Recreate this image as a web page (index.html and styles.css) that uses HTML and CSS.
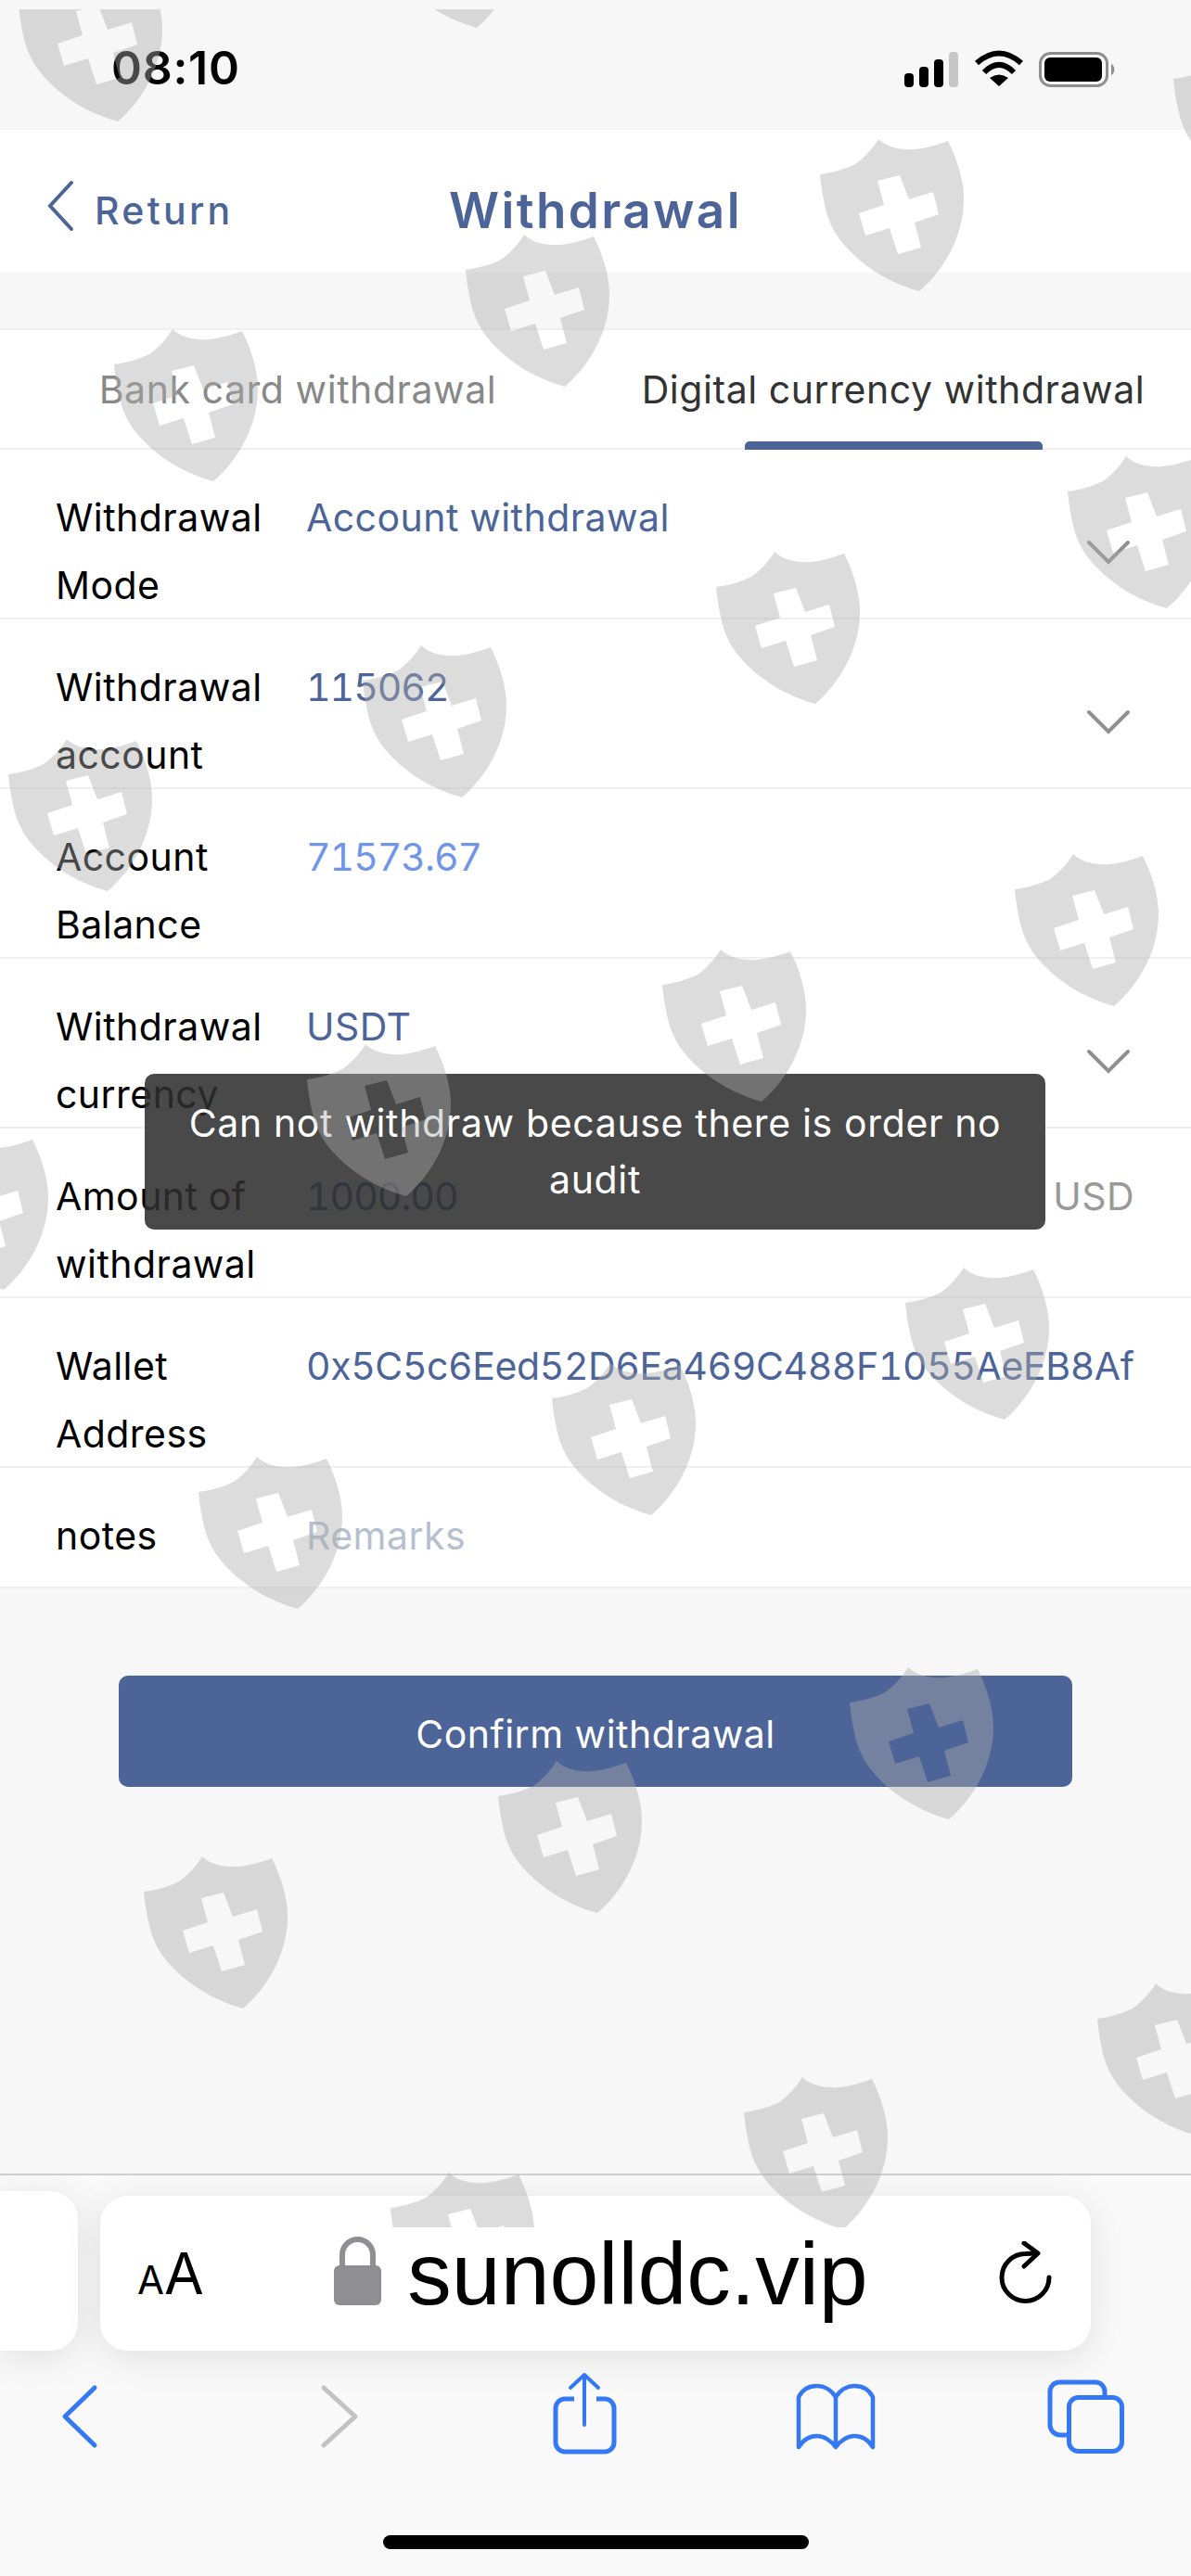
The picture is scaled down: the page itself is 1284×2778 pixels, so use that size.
FILE: index.html
```html
<!DOCTYPE html>
<html lang="en">
<head>
    <meta charset="UTF-8">
    <meta name="viewport" content="width=device-width, initial-scale=1.0">
    <title>Withdrawal</title>
    <link rel="stylesheet" href="styles.css">
</head>
<body>
    <div class="page">
        <div class="status">
            <span class="time">08:10</span>
            <div class="status-icons">
                <svg class="signal" width="58" height="38" viewBox="0 0 58 38">
                    <rect x="0" y="23" width="10" height="15" rx="4" fill="#000"/>
                    <rect x="16" y="16" width="10" height="22" rx="4" fill="#000"/>
                    <rect x="32" y="8" width="10" height="30" rx="4" fill="#000"/>
                    <rect x="48" y="0" width="10" height="38" rx="4" fill="#c6c6c6"/>
                </svg>
                <svg class="wifi" width="54" height="42" viewBox="0 0 54 42">
                    <path d="M3 16 Q27 -5 51 16" fill="none" stroke="#000" stroke-width="6"/>
                    <path d="M11 26 Q27 10 43 26" fill="none" stroke="#000" stroke-width="6"/>
                    <path d="M27 41 L17 32 Q27 25 37 32 Z" fill="#000"/>
                </svg>
                <svg class="battery" width="84" height="38" viewBox="0 0 84 38">
                    <rect x="1.5" y="1.5" width="72" height="35" rx="11" fill="none" stroke="#8e8e8e" stroke-width="3"/>
                    <rect x="6" y="6" width="62" height="26" rx="6" fill="#000"/>
                    <path d="M78 13 a7 7 0 0 1 0 12 Z" fill="#8e8e8e"/>
                </svg>
            </div>
        </div>

        <div class="nav">
            <div class="back">
                <svg width="30" height="56" viewBox="0 0 30 56">
                    <path d="M27 3 L4 28 L27 53" fill="none" stroke="#4c6497" stroke-width="4" stroke-linecap="round"/>
                </svg>
                <span>Return</span>
            </div>
            <h1 class="title">Withdrawal</h1>
        </div>

        <div class="tabs">
            <div class="tab">Bank card withdrawal</div>
            <div class="tab active">Digital currency withdrawal</div>
        </div>

        <div class="form">
            <div class="row">
                <div class="label">Withdrawal Mode</div>
                <div class="value">Account withdrawal</div>
                <svg class="chevron" width="48" height="28" viewBox="0 0 48 28"><path d="M3 3 L24 24 L45 3" fill="none" stroke="#8f8f8f" stroke-width="4" stroke-linecap="round"/></svg>
            </div>
            <div class="row">
                <div class="label">Withdrawal account</div>
                <div class="value num">115062</div>
                <svg class="chevron" width="48" height="28" viewBox="0 0 48 28"><path d="M3 3 L24 24 L45 3" fill="none" stroke="#8f8f8f" stroke-width="4" stroke-linecap="round"/></svg>
            </div>
            <div class="row">
                <div class="label">Account Balance</div>
                <div class="value num balance">71573.67</div>
            </div>
            <div class="row">
                <div class="label">Withdrawal currency</div>
                <div class="value">USDT</div>
                <svg class="chevron" width="48" height="28" viewBox="0 0 48 28"><path d="M3 3 L24 24 L45 3" fill="none" stroke="#8f8f8f" stroke-width="4" stroke-linecap="round"/></svg>
            </div>
            <div class="row">
                <div class="label">Amount of withdrawal</div>
                <div class="value num">1000.00</div>
                <div class="unit">USD</div>
            </div>
            <div class="row">
                <div class="label">Wallet Address</div>
                <div class="value address">0x5C5c6Eed52D6Ea469C488F1055AeEB8Af</div>
            </div>
            <div class="row notes">
                <div class="label">notes</div>
                <div class="value placeholder">Remarks</div>
            </div>
        </div>

        <button class="confirm" type="button">Confirm withdrawal</button>

        <div class="toolbar">
            <div class="cards">
                <div class="other-tab"></div>
                <div class="url-card">
                    <div class="aa"><span class="small-a">A</span><span class="big-a">A</span></div>
                    <div class="url">
                        <svg width="51" height="74" viewBox="0 0 51 74">
                            <path d="M9 34 V19.5 a16.5 16.5 0 0 1 33 0 V34" fill="none" stroke="#8e8e93" stroke-width="6"/>
                            <rect x="0" y="31" width="51" height="43" rx="6" fill="#8e8e93"/>
                        </svg>
                        <span>sunolldc.vip</span>
                    </div>
                    <svg class="reload" width="60" height="70" viewBox="0 0 60 70">
                        <path d="M55 39 A25.5 25.5 0 1 1 29.500 13.500 L40 13" fill="none" stroke="#000" stroke-width="5" stroke-linecap="round"/>
                        <path d="M28 2 L43 13 L28 27" fill="none" stroke="#000" stroke-width="5" stroke-linecap="round" stroke-linejoin="round"/>
                    </svg>
                </div>
            </div>
            <div class="tool-icons">
                <svg class="ti-back" width="50" height="96" viewBox="0 0 50 96">
                    <path d="M42 20 L10 51 L42 82" fill="none" stroke="#3478f6" stroke-width="5" stroke-linecap="round" stroke-linejoin="round"/>
                </svg>
                <svg class="ti-forward" width="50" height="96" viewBox="0 0 50 96">
                    <path d="M9 20 L43 51 L9 82" fill="none" stroke="#c2c2c2" stroke-width="5" stroke-linecap="round" stroke-linejoin="round"/>
                </svg>
                <svg class="ti-share" width="80" height="96" viewBox="0 0 80 96">
                    <path d="M29 32 H19 a10 10 0 0 0 -10 10 V79 a10 10 0 0 0 10 10 H62 a10 10 0 0 0 10 -10 V42 a10 10 0 0 0 -10 -10 H53" fill="none" stroke="#3478f6" stroke-width="5"/>
                    <path d="M40 60 V6 M25 20 L40 6 L55 20" fill="none" stroke="#3478f6" stroke-width="4" stroke-linecap="round" stroke-linejoin="round"/>
                </svg>
                <svg class="ti-book" width="100" height="96" viewBox="0 0 100 96">
                    <path d="M51 30 C46 22 38 18 31 18 C22 18 15 22 11 30 V84 C16 76 23 72 31 72 C38 72 46 77 51 84 C56 77 64 72 71 72 C79 72 86 76 91 84 V30 C87 22 80 18 71 18 C64 18 56 22 51 30 V84" fill="none" stroke="#3478f6" stroke-width="4.500" stroke-linejoin="round" stroke-linecap="round"/>
                </svg>
                <svg class="ti-tabs" width="96" height="96" viewBox="0 0 96 96">
                    <path d="M67 30 V24 a10 10 0 0 0 -10 -10 H18 a10 10 0 0 0 -10 10 V60 a11 11 0 0 0 11 11 H28" fill="none" stroke="#3478f6" stroke-width="5"/>
                    <rect x="28.500" y="30.500" width="57" height="58" rx="10" fill="none" stroke="#3478f6" stroke-width="5"/>
                </svg>
            </div>
            <div class="home-bar"></div>
        </div>

        <div class="toast">Can not withdraw because there is order no audit</div>

        <!-- watermark shields, free canvas over the whole page -->
        <svg class="watermark" width="1284" height="2392" viewBox="0 10 1284 2392">
            <defs>
                <path id="shield" fill-rule="evenodd" d="M63 0 C72 9 87 12 102 11 C114 10 127 6 138 2 C148 22 155 44 155 65 C155 105 133 142 107 164 C85 158 62 147 42 130 C25 115 12 100 6 75 C3 62 1 50 0 38 C14 36 26 33 38 27 C48 20 57 10 63 0 Z M62 45 L86 39 L96 65 L122 57 L128 81 L102 90 L109 117 L84 124 L75 96 L49 104 L42 80 L69 71 Z"/>
            </defs>
            <g fill="#acacac" fill-opacity="0.42">
                <use href="#shield" x="20" y="-33"/>
                <use href="#shield" x="407" y="-134"/>
                <use href="#shield" x="1265" y="47"/>
                <use href="#shield" x="884" y="150"/>
                <use href="#shield" x="502" y="253"/>
                <use href="#shield" x="123" y="355"/>
                <use href="#shield" x="1151" y="492"/>
                <use href="#shield" x="772" y="595"/>
                <use href="#shield" x="391" y="696"/>
                <use href="#shield" x="9" y="797"/>
                <use href="#shield" x="1094" y="921"/>
                <use href="#shield" x="714" y="1024"/>
                <use href="#shield" x="331" y="1126"/>
                <use href="#shield" x="-103" y="1227"/>
                <use href="#shield" x="976" y="1367"/>
                <use href="#shield" x="595" y="1470"/>
                <use href="#shield" x="214" y="1571"/>
                <use href="#shield" x="916" y="1798"/>
                <use href="#shield" x="537" y="1899"/>
                <use href="#shield" x="155" y="2002"/>
                <use href="#shield" x="1183" y="2139"/>
                <use href="#shield" x="802" y="2240"/>
                <use href="#shield" x="421" y="2343"/>
            </g>
        </svg>
    </div>
</body>
</html>
```

FILE: styles.css
```css
* {
    box-sizing: border-box;
}
body {
    margin: 0;
    font-family: Inter, "Liberation Sans", sans-serif;
    background-color: #f7f7f7;
}
.page {
    position: relative;
    width: 1284px;
    height: 2778px;
    overflow: hidden;
    display: flex;
    flex-direction: column;
}

/* status bar */
.status {
    height: 140px;
    flex: none;
    display: flex;
    align-items: center;
    justify-content: space-between;
    padding: 6px 80px 0 120px;
}
.time {
    font-size: 50px;
    font-weight: 600;
    letter-spacing: 0.700px;
    color: #000;
}
.status-icons {
    display: flex;
    align-items: flex-end;
    gap: 17px;
}
.wifi {
    margin-right: -1px;
}

/* header */
.nav {
    height: 154px;
    flex: none;
    background: white;
    display: grid;
    grid-template-columns: 1fr auto 1fr;
    align-items: center;
    margin-bottom: 60px;
    padding-top: 10px;
}
.back {
    display: flex;
    align-items: center;
    gap: 22px;
    padding-left: 50px;
    color: #4c6497;
    font-size: 41px;
    font-weight: 500;
    letter-spacing: 3.300px;
}
.back span {
    margin-top: 10px;
}
.title {
    grid-column: 2;
    margin: 10px 0 0;
    color: #4c6497;
    font-size: 53px;
    font-weight: 600;
    letter-spacing: 2.400px;
}

/* tabs */
.tabs {
    height: 131px;
    flex: none;
    background: white;
    border-top: 2px solid #efefef;
    border-bottom: 2px solid #efefef;
    display: grid;
    grid-template-columns: 1fr 1fr;
}
.tab {
    position: relative;
    display: flex;
    align-items: center;
    justify-content: center;
    font-size: 41px;
    letter-spacing: 0.550px;
    color: #888;
    white-space: nowrap;
}
.tab.active {
    color: #333;
}
.tab.active::after {
    content: "";
    position: absolute;
    left: 161px;
    right: 160px;
    bottom: -2px;
    height: 9px;
    border-radius: 5px 5px 0 0;
    background-color: #4c6497;
}

/* form rows */
.form {
    background: white;
    flex: none;
}
.row {
    height: 183px;
    border-bottom: 2px solid #efefef;
    padding: 37px 35px 0 60px;
    display: flex;
    font-size: 41px;
    line-height: 73px;
    letter-spacing: 0.450px;
    font-variant-numeric: tabular-nums;
    color: #000;
}
.row.notes {
    height: 130px;
}
.label {
    flex: 0 0 270px;
    padding-right: 29px;
}
.value {
    flex: 1;
    color: #4c6497;
    white-space: nowrap;
}
.num {
    letter-spacing: -1px;
}
.balance {
    color: #6f94e8;
}
.placeholder {
    color: #b6bfd0;
}
.address {
    flex: none;
    letter-spacing: -0.400px;
}
.unit {
    color: #999;
    padding-right: 26px;
}
.chevron {
    margin: 60px 30px 0 0;
}

.confirm {
    display: block;
    flex: none;
    width: 1028px;
    height: 120px;
    margin: 94px 0 0 128px;
    padding-top: 6px;
    border: none;
    border-radius: 10px;
    background-color: #4c6497;
    color: white;
    font-family: inherit;
    font-size: 41px;
    letter-spacing: 0.500px;
}

/* browser toolbar */
.toolbar {
    position: absolute;
    left: 0;
    right: 0;
    bottom: 0;
    height: 434px;
    background-color: #f9f9f9;
    border-top: 2px solid #cfcfcf;
}
.cards {
    height: 172px;
    margin-top: 17px;
    display: flex;
    align-items: flex-end;
    gap: 24px;
}
.other-tab {
    width: 84px;
    height: 172px;
    background: white;
    border-radius: 0 30px 30px 0;
    box-shadow: 0 8px 40px rgba(0, 0, 0, 0.1);
}
.url-card {
    width: 1068px;
    height: 167px;
    background: white;
    border-radius: 30px;
    box-shadow: 0 8px 40px rgba(0, 0, 0, 0.1);
    display: flex;
    align-items: center;
    padding: 0 40px;
    color: #000;
}
.aa {
    width: 70px;
    display: flex;
    align-items: baseline;
    line-height: 1;
}
.small-a {
    font-size: 42px;
}
.big-a {
    font-size: 62px;
}
.url {
    flex: 1;
    display: flex;
    align-items: center;
    justify-content: center;
    gap: 28px;
    padding: 2px 0 0 2px;
    font-family: "Liberation Sans", sans-serif;
    font-size: 95px;
}
.url svg {
    margin-top: -8px;
}
.tool-icons {
    display: flex;
    margin-top: 20px;
}
.ti-back {
    margin-left: 60px;
}
.ti-forward {
    margin-left: 230px;
}
.ti-share {
    margin-left: 200px;
}
.ti-book {
    margin-left: 180px;
}
.ti-tabs {
    margin-left: 174px;
}
.home-bar {
    width: 459px;
    height: 15px;
    margin: 83px auto 0;
    border-radius: 8px;
    background-color: #000;
}

.toast {
    position: absolute;
    left: 156px;
    top: 1158px;
    width: 971px;
    padding: 23px 44px;
    border-radius: 10px;
    background-color: rgba(46, 46, 46, 0.87);
    color: white;
    font-size: 41px;
    line-height: 61px;
    letter-spacing: 0.650px;
    text-align: center;
}

.watermark {
    position: absolute;
    left: 0;
    top: 10px;
    pointer-events: none;
}
```
